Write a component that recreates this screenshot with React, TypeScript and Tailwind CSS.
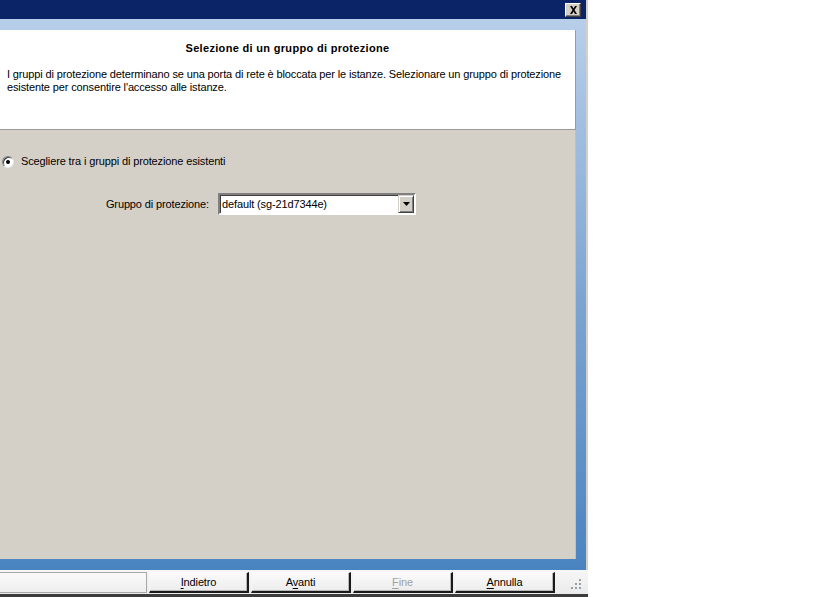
import React from "react";

const font = { fontFamily: '"Liberation Sans", Arial, sans-serif' };

function WizardButton({ label, mnemonic, rest, disabled }: { label?: string; mnemonic: string; rest: string; disabled?: boolean }) {
  return (
    <div className="h-[21px] w-[100px] flex items-center justify-center bg-gradient-to-b from-[#fbfbfb] to-[#ececec] border-t border-l border-t-[#ffffff] border-l-[#f6f6f6] border-r-2 border-b-2 border-r-[#1a1a1a] border-b-[#1a1a1a] shadow-[inset_-1px_-1px_0_#b8b8b8]">
      <span className={disabled ? "text-[#a0a0a0]" : "text-black"}>
        {label}
        <span className="underline underline-offset-2">{mnemonic}</span>
        {rest}
      </span>
    </div>
  );
}

export default function App() {
  return (
    <div className="w-[836px] h-[597px] bg-white flex text-[11px] tracking-[-0.13px] text-black" style={font}>
      <div className="w-[588px] h-full flex flex-col">
        {/* caption */}
        <div className="h-[19px] bg-[#0b2468] flex items-center justify-end pr-[5px] border-r-2 border-r-[#d4d0c8]">
          <div className="w-[16px] h-[14px] bg-[#d4d0c8] border border-t-white border-l-white border-r-[#404040] border-b-[#404040] flex items-center justify-center shadow-[inset_-1px_-1px_0_#808080]">
            <svg width="9" height="8" viewBox="0 0 9 8">
              <path d="M1 0h2l1.5 2.5L6 0h2L5.5 4 8 8H6L4.5 5.5 3 8H1l2.5-4z" fill="#000" />
            </svg>
          </div>
        </div>

        {/* body framed in blue */}
        <div className="flex-1 flex flex-col bg-gradient-to-b from-[#b8cfea] via-[#7ea5d2] to-[#4a84c0] pt-[11px] pr-[10px] pb-[11px] border-r-2 border-r-[#d4d0c8]">
          <div className="h-[100px] bg-white border-r border-b border-r-[#9a9a9a] border-b-[#9a9a9a] flex flex-col">
            <div className="pt-[11px] text-center font-bold tracking-[0.32px] leading-[14px]">Selezione di un gruppo di protezione</div>
            <div className="pt-[13px] pl-[7px] pr-[2px] leading-[13px]">
              I gruppi di protezione determinano se una porta di rete è bloccata per le istanze. Selezionare un gruppo di protezione esistente per consentire l'accesso alle istanze.
            </div>
          </div>
          <div className="flex-1 bg-[#d4d0c8] border-r border-r-[#c0c0c0] flex flex-col">
            <div className="mt-[25px] flex items-center gap-[7px] pl-[2px]">
              <div className="w-[12px] h-[12px] rounded-full bg-white border border-t-[#808080] border-l-[#808080] border-r-[#e8e8e8] border-b-[#e8e8e8] flex items-center justify-center shadow-[inset_1px_1px_0_#404040]">
                <div className="w-[4px] h-[4px] rounded-full bg-black" />
              </div>
              <span className="leading-[13px]">Scegliere tra i gruppi di protezione esistenti</span>
            </div>
            <div className="mt-[25px] flex items-center">
              <span className="w-[209px] text-right leading-[13px] pt-[1px]">Gruppo di protezione:</span>
              <div className="ml-[9px] w-[198px] h-[22px] bg-white border-2 border-t-[#808080] border-l-[#808080] border-r-[#ffffff] border-b-[#ffffff] shadow-[inset_1px_1px_0_#404040] flex items-center">
                <span className="flex-1 pl-[2px] pt-[1px] leading-[13px]">default (sg-21d7344e)</span>
                <div className="w-[16px] h-[18px] bg-[#d4d0c8] border border-t-[#d4d0c8] border-l-[#d4d0c8] border-r-[#404040] border-b-[#404040] shadow-[inset_1px_1px_0_#ffffff,inset_-1px_-1px_0_#808080] flex items-center justify-center">
                  <svg width="7" height="4" viewBox="0 0 7 4">
                    <path d="M0 0h7L3.5 4z" fill="#000" />
                  </svg>
                </div>
              </div>
            </div>
          </div>
        </div>

        {/* button bar */}
        <div className="h-[24px] bg-gradient-to-b from-[#f7f7f7] to-[#ebebeb] flex items-center gap-[2px] pt-[1px] pr-[2px]">
          <div className="w-[147px] h-[21px] border border-[#a8a8a8] border-l-0 bg-gradient-to-b from-[#fafafa] to-[#eeeeee]" />
          <WizardButton mnemonic="I" rest="ndietro" />
          <WizardButton label="A" mnemonic="v" rest="anti" />
          <WizardButton mnemonic="F" rest="ine" disabled />
          <WizardButton mnemonic="A" rest="nnulla" />
          <div className="flex-1 h-full relative">
            <svg className="absolute right-[4px] bottom-[3px]" width="12" height="12" viewBox="0 0 12 12">
              <rect x="9" y="0" width="2" height="2" fill="#9aa0a8" />
              <rect x="5" y="4" width="2" height="2" fill="#9aa0a8" />
              <rect x="9" y="4" width="2" height="2" fill="#9aa0a8" />
              <rect x="1" y="8" width="2" height="2" fill="#9aa0a8" />
              <rect x="5" y="8" width="2" height="2" fill="#9aa0a8" />
              <rect x="9" y="8" width="2" height="2" fill="#9aa0a8" />
            </svg>
          </div>
        </div>
        <div className="h-[3px] bg-[#3c3c3c]" />
      </div>
    </div>
  );
}
